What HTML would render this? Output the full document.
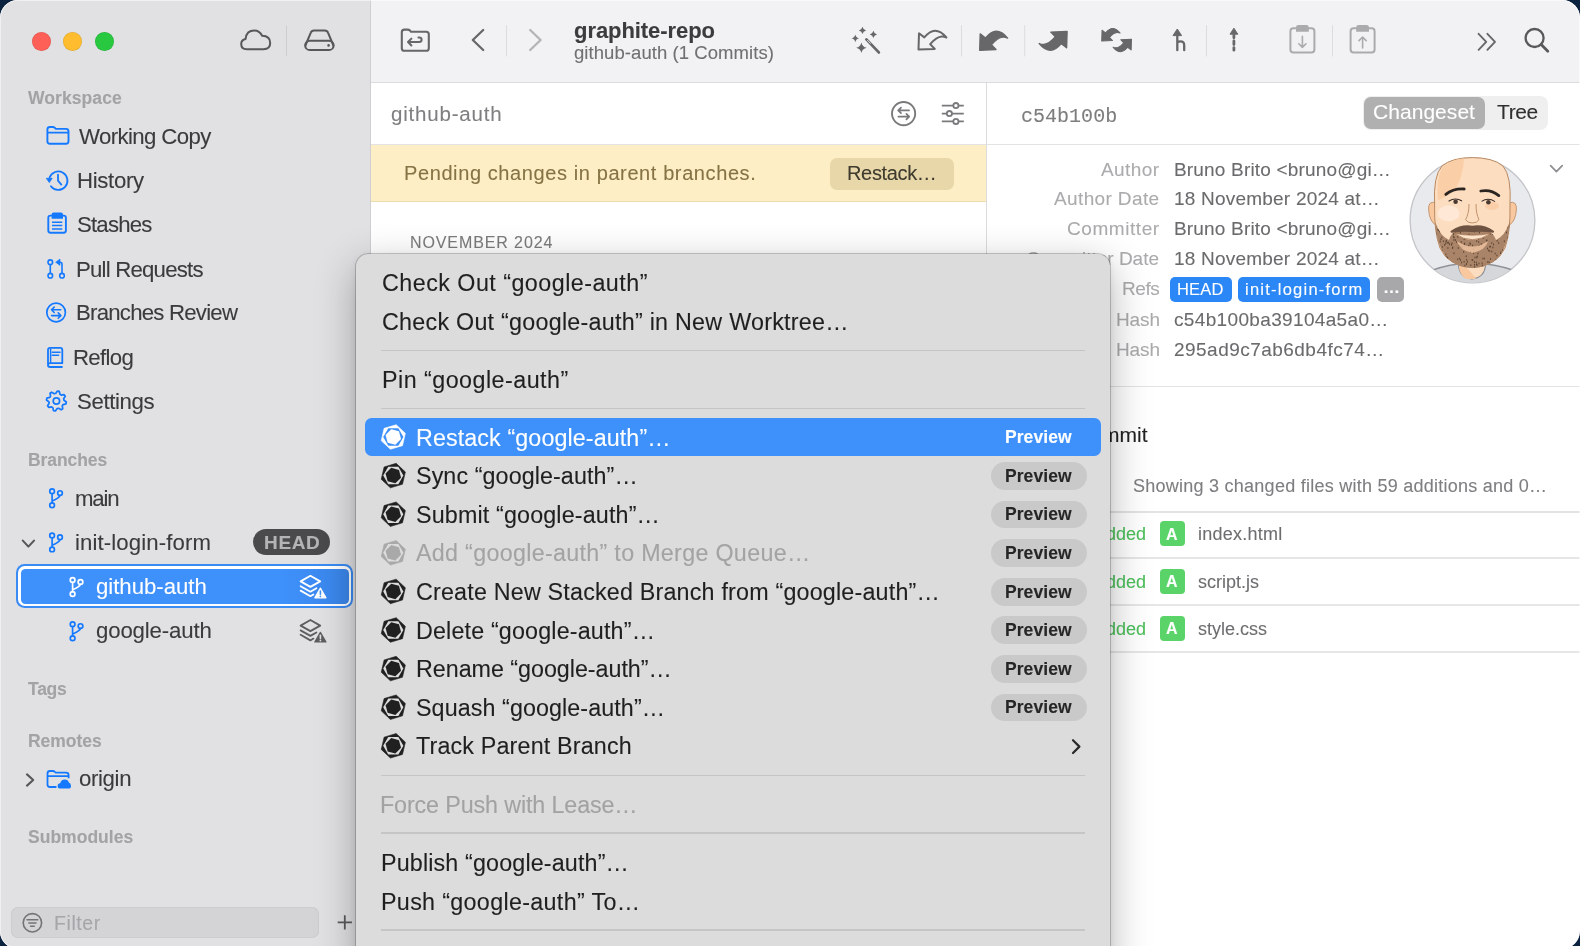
<!DOCTYPE html>
<html><head><meta charset="utf-8">
<style>
*{margin:0;padding:0;box-sizing:border-box}
html,body{width:1580px;height:946px;overflow:hidden;background:#0C2340}
.win{position:absolute;left:0;top:0;width:1580px;height:949px;border-radius:18px;overflow:hidden;background:#fff}
.abs{position:absolute}
.t{position:absolute;white-space:nowrap;font-family:"Liberation Sans",sans-serif;will-change:transform;-webkit-text-stroke:0.1px currentColor}
svg{position:absolute;overflow:visible}
</style></head><body>
<div class="win">
  <!-- sidebar -->
  <div class="abs" style="left:0;top:0;width:371px;height:946px;background:#E1E1E4"></div>
  <div class="abs" style="left:370px;top:0;width:1px;height:946px;background:#CFCFD1"></div>
  <!-- toolbar -->
  <div class="abs" style="left:371px;top:0;width:1209px;height:82px;background:#F2F2F4"></div>
  <div class="abs" style="left:371px;top:82px;width:1209px;height:1px;background:#DCDCDE"></div>
  <!-- list header border -->
  <div class="abs" style="left:371px;top:144px;width:615px;height:1px;background:#E3E3E3"></div>
  <!-- banner -->
  <div class="abs" style="left:371px;top:145px;width:615px;height:56px;background:#FDEEC5"></div>
  <div class="abs" style="left:371px;top:201px;width:615px;height:1px;background:#EBDCAE"></div>
  <div class="abs" style="left:830px;top:158px;width:124px;height:31.5px;border-radius:7px;background:#E8D7A8"></div>
  <!-- pane divider -->
  <div class="abs" style="left:986px;top:83px;width:1px;height:863px;background:#DCDCDC"></div>
  <!-- detail header border -->
  <div class="abs" style="left:987px;top:144px;width:593px;height:1px;background:#E3E3E3"></div>
  <div class="abs" style="left:987px;top:386px;width:593px;height:1px;background:#E3E3E3"></div>
  <div class="abs" style="left:987px;top:511px;width:593px;height:1.5px;background:#E3E3E3"></div>
  <div class="abs" style="left:987px;top:557px;width:593px;height:1.5px;background:#E6E6E6"></div>
  <div class="abs" style="left:987px;top:604px;width:593px;height:1.5px;background:#E6E6E6"></div>
  <div class="abs" style="left:987px;top:651px;width:593px;height:1.5px;background:#E6E6E6"></div>
  <!-- segmented control -->
  <div class="abs" style="left:1363px;top:95.6px;width:185px;height:34.3px;border-radius:8px;background:#EFEFEF"></div>
  <div class="abs" style="left:1364px;top:97px;width:120.6px;height:31.8px;border-radius:7px;background:#B0B0B0"></div>
  <!-- refs badges -->
  <div class="abs" style="left:1170px;top:276.6px;width:61.6px;height:25px;border-radius:5px;background:#2C87F6"></div>
  <div class="abs" style="left:1238px;top:276.6px;width:132.4px;height:25px;border-radius:5px;background:#2C87F6"></div>
  <div class="abs" style="left:1377px;top:276.6px;width:26.8px;height:25px;border-radius:5px;background:#A8A8AA"></div>
  <div class="t" style="left:1382.5px;top:279px;font-size:17px;line-height:17px;font-weight:700;color:#fff">…</div>
  <!-- A badges -->
  <div class="abs" style="left:1160px;top:521.3px;width:24.8px;height:25.2px;border-radius:4px;background:#5AD368"></div>
  <div class="abs" style="left:1160px;top:568.5px;width:24.8px;height:25.2px;border-radius:4px;background:#5AD368"></div>
  <div class="abs" style="left:1160px;top:615.7px;width:24.8px;height:25.2px;border-radius:4px;background:#5AD368"></div>
  <div class="t" style="left:1166px;top:526.8px;font-size:16px;line-height:16px;font-weight:700;color:#fff">A</div>
  <div class="t" style="left:1166px;top:574px;font-size:16px;line-height:16px;font-weight:700;color:#fff">A</div>
  <div class="t" style="left:1166px;top:621.2px;font-size:16px;line-height:16px;font-weight:700;color:#fff">A</div>
  <!-- traffic lights -->
  <div class="abs" style="left:31.7px;top:31.5px;width:19px;height:19px;border-radius:50%;background:#FE5F57;box-shadow:inset 0 0 0 0.5px rgba(0,0,0,0.12)"></div>
  <div class="abs" style="left:63.1px;top:31.5px;width:19px;height:19px;border-radius:50%;background:#FEBC2E;box-shadow:inset 0 0 0 0.5px rgba(0,0,0,0.12)"></div>
  <div class="abs" style="left:94.9px;top:31.5px;width:19px;height:19px;border-radius:50%;background:#28C840;box-shadow:inset 0 0 0 0.5px rgba(0,0,0,0.12)"></div>
  <!-- sidebar selection -->
  <div class="abs" style="left:16.3px;top:564.2px;width:336.8px;height:43.4px;border-radius:8.5px;background:#3A8BF3"></div><div class="abs" style="left:18.1px;top:566px;width:333.2px;height:39.8px;border-radius:6.8px;background:#FFFFFF"></div>
  <div class="abs" style="left:20.8px;top:568.6px;width:328.4px;height:35.1px;border-radius:4.5px;background:linear-gradient(90deg,#3E90FA 0%,#3E90FA 80%,#3A86EA 100%)"></div>
  <!-- HEAD badge -->
  <div class="abs" style="left:253px;top:528.6px;width:77px;height:26.5px;border-radius:13.25px;background:#4A4A4D"></div>
  <!-- filter field -->
  <div class="abs" style="left:11.2px;top:906.9px;width:307.8px;height:31.6px;border-radius:7px;background:#D4D4D7;box-shadow:inset 0 0 0 1px #CDCDD0"></div>
  <svg width='1580' height='946' style='left:0;top:0'><path d='M47.4,141.2 V129.5 Q47.4,127 49.9,127 H52.8 Q54,127 54.9,127.9 L55.8,128.9 H66 Q68.5,128.9 68.5,131.4 V141.2 Q68.5,143.7 66,143.7 H49.9 Q47.4,143.7 47.4,141.2 Z M47.4,132.6 H68.5' fill='none' stroke='#1479FF' stroke-width='1.9' stroke-linejoin='round'/><path d='M49.6,177.5 A9.2,9.2 0 1 1 50.9,186.2' fill='none' stroke='#1479FF' stroke-width='1.8' stroke-linecap='round'/><path d='M46.3,178.3 L52.2,178.3 L49.3,182.6 Z' fill='#1479FF' stroke='#1479FF' stroke-width='0.8' stroke-linejoin='round'/><path d='M58,174.6 V180.6 L61.3,184.6' fill='none' stroke='#1479FF' stroke-width='1.8' stroke-linecap='round' stroke-linejoin='round'/><rect x='48.3' y='215.6' width='17.6' height='17.2' rx='2.2' fill='none' stroke='#1479FF' stroke-width='1.9'/><path d='M51.6,218.8 V214.6 Q51.6,212.6 53.6,212.6 H61 Q63,212.6 63,214.6 V218.8 Z' fill='#1479FF'/><path d='M52,222.2 H62.3 M52,225.6 H62.3 M52,229 H62.3' stroke='#1479FF' stroke-width='1.5'/><g fill='none' stroke='#1479FF' stroke-width='1.6'><circle cx='50.3' cy='262.2' r='2.3'/><circle cx='50.3' cy='275.7' r='2.3'/><circle cx='62' cy='275.7' r='2.3'/><path d='M50.3,264.5 V273.4 M62,273.4 V264 Q62,262.2 60.2,262.2 H58.5'/></g><path d='M55.6,262.2 L60,259 V265.4 Z' fill='#1479FF' stroke='#1479FF' stroke-width='0.6' stroke-linejoin='round'/><circle cx='56.1' cy='312.5' r='9.3' fill='none' stroke='#1479FF' stroke-width='1.7'/><path d='M51.5,309.8 H60.8 M51.6,315.6 H60.9 M54.2,307.1 L51.5,309.8 L54.2,312.5 M58.2,312.9 L60.9,315.6 L58.2,318.3' fill='none' stroke='#1479FF' stroke-width='1.6' stroke-linecap='round' stroke-linejoin='round'/><path d='M48,364.5 V350 Q48,347.9 50.1,347.9 H60.3 Q62.3,347.9 62.3,350 V363.2 H50.2 Q48,363.2 48,365.3 Q48,367 50.2,367 H62.6' fill='none' stroke='#1479FF' stroke-width='1.8' stroke-linejoin='round'/><path d='M50.6,348.5 V362.8' stroke='#1479FF' stroke-width='1.5'/><path d='M52.2,352.2 H60 M52.2,355.2 H58.6' stroke='#1479FF' stroke-width='1.5' stroke-linecap='round'/><polygon points='57.38,391.05 59.30,391.43 59.98,394.30 61.22,395.13 64.13,394.66 65.22,396.29 63.67,398.79 63.96,400.26 66.35,401.98 65.97,403.90 63.10,404.58 62.27,405.82 62.74,408.73 61.11,409.82 58.61,408.27 57.14,408.56 55.42,410.95 53.50,410.57 52.82,407.70 51.58,406.87 48.67,407.34 47.58,405.71 49.13,403.21 48.84,401.74 46.45,400.02 46.83,398.10 49.70,397.42 50.53,396.18 50.06,393.27 51.69,392.18 54.19,393.73 55.66,393.44' fill='none' stroke='#1479FF' stroke-width='1.7' stroke-linejoin='round'/><circle cx='56.4' cy='401' r='3.2' fill='none' stroke='#1479FF' stroke-width='1.7'/><g fill='none' stroke='#1479FF' stroke-width='1.7' stroke-linecap='round'><circle cx='52.1' cy='491.2' r='2.35'/><circle cx='60.0' cy='493.09999999999997' r='2.35'/><circle cx='52.1' cy='505.2' r='2.35'/><path d='M52.1,493.59999999999997 V502.8 M59.9,495.5 Q59.300000000000004,497.8 52.7,500.8'/></g><g fill='none' stroke='#1479FF' stroke-width='1.7' stroke-linecap='round'><circle cx='52.1' cy='535.4' r='2.35'/><circle cx='60.0' cy='537.3' r='2.35'/><circle cx='52.1' cy='549.4' r='2.35'/><path d='M52.1,537.8 V547.0 M59.9,539.6999999999999 Q59.300000000000004,542.0 52.7,545.0'/></g><g fill='none' stroke='#FFFFFF' stroke-width='1.7' stroke-linecap='round'><circle cx='72.6' cy='580.0' r='2.35'/><circle cx='80.5' cy='581.9' r='2.35'/><circle cx='72.6' cy='594.0' r='2.35'/><path d='M72.6,582.4 V591.6 M80.39999999999999,584.3 Q79.8,586.6 73.19999999999999,589.6'/></g><g fill='none' stroke='#1479FF' stroke-width='1.7' stroke-linecap='round'><circle cx='72.6' cy='624.2' r='2.35'/><circle cx='80.5' cy='626.1' r='2.35'/><circle cx='72.6' cy='638.2' r='2.35'/><path d='M72.6,626.6 V635.8000000000001 M80.39999999999999,628.5 Q79.8,630.8000000000001 73.19999999999999,633.8000000000001'/></g><path d='M22.8,540.6 L28.4,546.6 L34,540.6' fill='none' stroke='#58585B' stroke-width='2.1' stroke-linecap='round' stroke-linejoin='round'/><path d='M27,774.4 L33.2,780 L27,785.6' fill='none' stroke='#58585B' stroke-width='2.1' stroke-linecap='round' stroke-linejoin='round'/><path d='M56.5,787 H50 Q47.5,787 47.5,784.5 V773.5 Q47.5,771 50,771 H52.8 Q54,771 54.9,771.9 L55.7,772.6 H66.1 Q68.6,772.6 68.6,775.1 V778.3 M47.5,776.2 H68.6' fill='none' stroke='#1479FF' stroke-width='1.8' stroke-linejoin='round'/><path d='M59.6,788.6 Q57.6,788.6 57.6,786 Q57.6,783.4 60.2,783.2 Q61,779.4 64.8,779.4 Q68,779.4 68.9,782.6 Q71,783.2 71,785.9 Q71,788.6 68.4,788.6 Z' fill='#1479FF'/><g fill='none' stroke='#FFFFFF' stroke-width='1.8' stroke-linejoin='round' stroke-linecap='round'><path d='M310.4,575.8 L320.2,581.4 L310.4,586.9 L300.59999999999997,581.4 Z'/><path d='M300.59999999999997,586.1999999999999 L310.4,591.6999999999999 L316.4,588.3'/><path d='M300.59999999999997,590.5999999999999 L310.4,596.1999999999999 L313.4,594.4'/></g><path d='M320.4,588.0999999999999 L326.0,597.8 L314.79999999999995,597.8 Z' fill='#FFFFFF' stroke='#FFFFFF' stroke-width='1.2' stroke-linejoin='round'/><path d='M320.4,591.0 V594.1999999999999' stroke='#3E90FA' stroke-width='1.6' stroke-linecap='round'/><circle cx='320.4' cy='596.3' r='0.9' fill='#3E90FA'/><g fill='none' stroke='#5E5E61' stroke-width='1.8' stroke-linejoin='round' stroke-linecap='round'><path d='M310.4,620.0 L320.2,625.6 L310.4,631.1 L300.59999999999997,625.6 Z'/><path d='M300.59999999999997,630.4 L310.4,635.9 L316.4,632.5'/><path d='M300.59999999999997,634.8 L310.4,640.4 L313.4,638.6'/></g><path d='M320.4,632.3 L326.0,642.0 L314.79999999999995,642.0 Z' fill='#5E5E61' stroke='#5E5E61' stroke-width='1.2' stroke-linejoin='round'/><path d='M320.4,635.2 V638.4' stroke='#E1E1E4' stroke-width='1.6' stroke-linecap='round'/><circle cx='320.4' cy='640.5' r='0.9' fill='#E1E1E4'/><circle cx='32.4' cy='922.8' r='9.2' fill='none' stroke='#747477' stroke-width='1.6'/><path d='M27,919.8 H37.8 M28.8,923 H36 M30.6,926.2 H34.2' stroke='#747477' stroke-width='1.6' stroke-linecap='round'/><path d='M344.8,915.3 V929.5 M337.7,922.4 H351.9' stroke='#5A5A5D' stroke-width='1.8'/><path d='M246.8,49.2 Q241.2,49.2 241.2,44 Q241.2,40 245.6,39 Q246.4,30.6 254.4,30.6 Q259.4,30.6 262.2,35.8 Q270.2,36 270.2,43 Q270.2,49.2 263.6,49.2 Z' fill='none' stroke='#58585B' stroke-width='2' stroke-linejoin='round'/><rect x='286' y='25.6' width='1' height='30.6' fill='#CDCDD0'/><path d='M305.2,46 L310.8,32.6 Q311.6,30.4 314,30.4 H324.8 Q327.2,30.4 328,32.6 L333.6,46' fill='none' stroke='#58585B' stroke-width='2' stroke-linejoin='round'/><rect x='305.2' y='40.8' width='28.4' height='9.2' rx='4.6' fill='none' stroke='#58585B' stroke-width='2'/><circle cx='328.6' cy='45.4' r='1.3' fill='#58585B'/><path d='M401.8,48.2 V32.2 Q401.8,29.6 404.4,29.6 H407.6 Q409,29.6 410,30.6 L411,31.7 H426.2 Q428.8,31.7 428.8,34.3 V48.2 Q428.8,50.8 426.2,50.8 H404.4 Q401.8,50.8 401.8,48.2 Z' fill='none' stroke='#67676A' stroke-width='2.1' stroke-linejoin='round'/><path d='M411.4,38.6 L408,42 L411.4,45.5 M408.4,42 H419 Q421.6,42 421.6,39.7 Q421.6,37.4 419,37.4 H418.4' fill='none' stroke='#67676A' stroke-width='2' stroke-linecap='round' stroke-linejoin='round'/><path d='M483.2,30 L472.8,40 L483.2,50' fill='none' stroke='#67676A' stroke-width='2.3' stroke-linecap='round' stroke-linejoin='round'/><rect x='506' y='25.2' width='1' height='31.2' fill='#DCDCDE'/><path d='M530.2,30 L540.6,40 L530.2,50' fill='none' stroke='#B4B4B7' stroke-width='2.3' stroke-linecap='round' stroke-linejoin='round'/><path d='M862.5,26.799999999999997 Q863.112,29.787999999999997 866.1,30.4 Q863.112,31.012 862.5,34.0 Q861.888,31.012 858.9,30.4 Q861.888,29.787999999999997 862.5,26.799999999999997 Z M873.4,30.799999999999997 Q874.012,33.788 877.0,34.4 Q874.012,35.012 873.4,38.0 Q872.788,35.012 869.8,34.4 Q872.788,33.788 873.4,30.799999999999997 Z M855.3,34.4 Q855.963,37.637 859.1999999999999,38.3 Q855.963,38.962999999999994 855.3,42.199999999999996 Q854.637,38.962999999999994 851.4,38.3 Q854.637,37.637 855.3,34.4 Z M861.4,42.5 Q862.3009999999999,46.898999999999994 866.6999999999999,47.8 Q862.3009999999999,48.701 861.4,53.099999999999994 Q860.499,48.701 856.1,47.8 Q860.499,46.898999999999994 861.4,42.5 Z' fill='#67676A'/><path d='M866.4,39.4 L878.8,52.4' stroke='#67676A' stroke-width='2.8' stroke-linecap='round'/><path d='M867.6,40.4 L870.4,43.3' stroke='#F2F2F4' stroke-width='0.9' stroke-linecap='round'/><g transform='translate(917.4,30.2)'><path d='M1.6,3.1 L1.1,19.4 L17.4,18.7 L12.8,14 C16,10.2 20,6.6 24.4,6.3 Q27,6.2 29,7.3 C26,3.6 22,0.5 17.6,0.5 C13.4,0.5 10,3.6 6.9,7.2 Z' fill='none' stroke='#67676A' stroke-width='2' stroke-linejoin='round'/></g><rect x='961' y='25.2' width='1' height='31.2' fill='#DCDCDE'/><g transform='translate(978.6,30.8)'><path d='M1.6,3.1 L1.1,19.4 L17.4,18.7 L12.8,14 C16,10.2 20,6.6 24.4,6.3 Q27,6.2 29,7.3 C26,3.6 22,0.5 17.6,0.5 C13.4,0.5 10,3.6 6.9,7.2 Z' fill='#67676A' stroke='#67676A' stroke-width='1.4' stroke-linejoin='round'/></g><rect x='1024.2' y='25.2' width='1' height='31.2' fill='#DCDCDE'/><g transform='translate(1068.2,50.8) scale(-1,-1)'><path d='M1.6,3.1 L1.1,19.4 L17.4,18.7 L12.8,14 C16,10.2 20,6.6 24.4,6.3 Q27,6.2 29,7.3 C26,3.6 22,0.5 17.6,0.5 C13.4,0.5 10,3.6 6.9,7.2 Z' fill='#67676A' stroke='#67676A' stroke-width='1.4' stroke-linejoin='round'/></g><g transform='translate(1101,28.2) scale(0.66)'><path d='M1.6,3.1 L1.1,19.4 L17.4,18.7 L12.8,14 C16,10.2 20,6.6 24.4,6.3 Q27,6.2 29,7.3 C26,3.6 22,0.5 17.6,0.5 C13.4,0.5 10,3.6 6.9,7.2 Z' fill='#67676A' stroke='#67676A' stroke-width='1.6' stroke-linejoin='round'/></g><g transform='translate(1132.2,52) scale(-0.66,-0.66)'><path d='M1.6,3.1 L1.1,19.4 L17.4,18.7 L12.8,14 C16,10.2 20,6.6 24.4,6.3 Q27,6.2 29,7.3 C26,3.6 22,0.5 17.6,0.5 C13.4,0.5 10,3.6 6.9,7.2 Z' fill='#67676A' stroke='#67676A' stroke-width='1.6' stroke-linejoin='round'/></g><path d='M1177.3,50.2 V36 M1177.3,42.6 Q1177.6,41.4 1180.4,41.4 Q1184.2,41.4 1184.2,45 V50.2' fill='none' stroke='#67676A' stroke-width='2.3' stroke-linecap='round' stroke-linejoin='round'/><path d='M1177.3,29 L1181.6,35.6 H1173 Z' fill='#67676A' stroke='#67676A' stroke-width='1' stroke-linejoin='round'/><rect x='1206' y='25.2' width='1' height='31.2' fill='#DCDCDE'/><path d='M1233.9,28.2 L1237.8,34.2 H1230 Z' fill='#67676A' stroke='#67676A' stroke-width='1' stroke-linejoin='round'/><path d='M1233.9,35.4 V37.8 M1233.9,41 V44.6 M1233.9,47.6 V50.2' stroke='#67676A' stroke-width='2.8' stroke-linecap='round'/><rect x='1290.4' y='28.2' width='24' height='24.4' rx='3' fill='none' stroke='#ABABAE' stroke-width='2'/><path d='M1296.0,31.8 V27.4 Q1296.0,25 1298.4,25 H1306.4 Q1308.8000000000002,25 1308.8000000000002,27.4 V31.8 Z' fill='#ABABAE'/><path d='M1302.4,36.4 V47.4 M1298.8000000000002,43.8 L1302.4,47.4 L1306.0,43.8' fill='none' stroke='#ABABAE' stroke-width='1.6' stroke-linecap='round' stroke-linejoin='round'/><rect x='1350.6' y='28.2' width='24' height='24.4' rx='3' fill='none' stroke='#ABABAE' stroke-width='2'/><path d='M1356.1999999999998,31.8 V27.4 Q1356.1999999999998,25 1358.6,25 H1366.6 Q1369.0,25 1369.0,27.4 V31.8 Z' fill='#ABABAE'/><path d='M1362.6,48 V37 M1359.0,40.6 L1362.6,37 L1366.1999999999998,40.6' fill='none' stroke='#ABABAE' stroke-width='1.6' stroke-linecap='round' stroke-linejoin='round'/><rect x='1332' y='25.4' width='1' height='31' fill='#DCDCDE'/><path d='M1478.6,33.8 L1486.2,41.8 L1478.6,49.8 M1487.4,33.8 L1495,41.8 L1487.4,49.8' fill='none' stroke='#67676A' stroke-width='1.9' stroke-linecap='round' stroke-linejoin='round'/><circle cx='1534.6' cy='38' r='9' fill='none' stroke='#59595C' stroke-width='2.3'/><path d='M1541.2,44.6 L1547.8,51.2' stroke='#59595C' stroke-width='2.8' stroke-linecap='round'/><circle cx='903.6' cy='113.6' r='11.6' fill='none' stroke='#7A7A7C' stroke-width='1.9'/><path d='M898.2,110.4 H909 M898.4,116.6 H909.2 M901,107.6 L898.2,110.4 L901,113.2 M906.4,113.8 L909.2,116.6 L906.4,119.4' fill='none' stroke='#7A7A7C' stroke-width='1.7' stroke-linecap='round' stroke-linejoin='round'/><path d='M941.8,105.6 H963.8 M941.8,113.6 H963.8 M941.8,121.4 H963.8' stroke='#7A7A7C' stroke-width='1.8'/><circle cx='955.9' cy='105.6' r='2.6' fill='#FFFFFF' stroke='#7A7A7C' stroke-width='1.8'/><circle cx='949.4' cy='113.6' r='2.6' fill='#FFFFFF' stroke='#7A7A7C' stroke-width='1.8'/><circle cx='955.9' cy='121.4' r='2.6' fill='#FFFFFF' stroke='#7A7A7C' stroke-width='1.8'/><path d='M1550.6,165.6 L1556.4,171.6 L1562.2,165.6' fill='none' stroke='#8E8E90' stroke-width='1.7' stroke-linecap='round' stroke-linejoin='round'/><defs><clipPath id='avc'><circle cx='1472.5' cy='220.4' r='62.4'/></clipPath><clipPath id='beardc'><path d='M1435.2,222 Q1436,246 1448,259 Q1459,268 1472.3,268 Q1486,268 1497,259 Q1509,246 1509.6,222 Q1505,236 1496,240 Q1492,228 1472.3,226.5 Q1452,228 1449,240 Q1440,236 1435.2,222 Z'/></clipPath></defs><circle cx='1472.5' cy='220.4' r='62.4' fill='#E9EAEE' stroke='#C4C5C8' stroke-width='1.3'/><g clip-path='url(#avc)'><path d='M1420,275 Q1440,266 1458,264 L1486,264 Q1505,266 1526,275 L1540,300 H1405 Z' fill='#D6D7DA' stroke='#8F9399' stroke-width='1.3'/><path d='M1458.5,252 V266 Q1460,278 1472,279 Q1484,278 1485.5,266 V252 Z' fill='#FCDDC0' stroke='#8F9399' stroke-width='1.1'/><path d='M1460,262 Q1470,270 1476,279 L1466,279 Q1459,274 1459,266 Z' fill='#F9C89E'/></g><path d='M1436,203 Q1428,200 1428.6,210 Q1429.4,222 1437,226 Z' fill='#F9C89E' stroke='#B98962' stroke-width='0.8'/><path d='M1509,203 Q1517,200 1516.4,210 Q1515.6,222 1508,226 Z' fill='#F9C89E' stroke='#B98962' stroke-width='0.8'/><path d='M1434.6,205 Q1433,176 1442,166 Q1452,157.6 1472.3,157.6 Q1493,157.6 1503,166 Q1511.6,176 1510,205 Q1510.6,232 1505,248 Q1497,266 1472.3,267.6 Q1448,266 1440,248 Q1434,232 1434.6,205 Z' fill='#FCDDC0' stroke='#B98962' stroke-width='1'/><path d='M1442,168 Q1452,158.4 1464,158.4 Q1463,176 1456,188 Q1450,196 1438,200 Q1436,180 1442,168 Z' fill='#F9C89E' opacity='0.75'/><ellipse cx='1448.6' cy='213.4' rx='11' ry='8' fill='#FFE9D8' opacity='0.9'/><ellipse cx='1492' cy='206' rx='7' ry='4' fill='#F9C89E' opacity='0.7'/><g clip-path='url(#beardc)'><rect x='1430' y='218' width='85' height='55' fill='#A98468'/><ellipse cx='1458.9' cy='227.2' rx='0.55' ry='1.0' fill='#5C4332'/><ellipse cx='1484.1' cy='223.5' rx='0.55' ry='1.0' fill='#5C4332'/><ellipse cx='1475.3' cy='237.6' rx='0.55' ry='1.0' fill='#5C4332'/><ellipse cx='1438.5' cy='244.4' rx='0.55' ry='1.0' fill='#5C4332'/><ellipse cx='1436.9' cy='240.8' rx='0.55' ry='1.0' fill='#5C4332'/><ellipse cx='1439.4' cy='224.4' rx='0.55' ry='1.0' fill='#5C4332'/><ellipse cx='1466.7' cy='259.7' rx='0.55' ry='1.0' fill='#5C4332'/><ellipse cx='1443.5' cy='230.7' rx='0.55' ry='1.0' fill='#5C4332'/><ellipse cx='1482.3' cy='265.5' rx='0.55' ry='1.0' fill='#5C4332'/><ellipse cx='1478.4' cy='239.0' rx='0.55' ry='1.0' fill='#5C4332'/><ellipse cx='1509.2' cy='222.2' rx='0.55' ry='1.0' fill='#5C4332'/><ellipse cx='1500.1' cy='233.9' rx='0.55' ry='1.0' fill='#5C4332'/><ellipse cx='1445.1' cy='225.7' rx='0.55' ry='1.0' fill='#5C4332'/><ellipse cx='1457.8' cy='259.2' rx='0.55' ry='1.0' fill='#5C4332'/><ellipse cx='1447.9' cy='247.9' rx='0.55' ry='1.0' fill='#5C4332'/><ellipse cx='1483.2' cy='237.9' rx='0.55' ry='1.0' fill='#5C4332'/><ellipse cx='1476.2' cy='223.0' rx='0.55' ry='1.0' fill='#5C4332'/><ellipse cx='1438.6' cy='229.9' rx='0.55' ry='1.0' fill='#5C4332'/><ellipse cx='1486.4' cy='240.5' rx='0.55' ry='1.0' fill='#5C4332'/><ellipse cx='1458.2' cy='248.1' rx='0.55' ry='1.0' fill='#5C4332'/><ellipse cx='1468.9' cy='234.4' rx='0.55' ry='1.0' fill='#5C4332'/><ellipse cx='1495.2' cy='253.6' rx='0.55' ry='1.0' fill='#5C4332'/><ellipse cx='1452.8' cy='247.6' rx='0.55' ry='1.0' fill='#5C4332'/><ellipse cx='1474.4' cy='262.0' rx='0.55' ry='1.0' fill='#5C4332'/><ellipse cx='1490.2' cy='233.8' rx='0.55' ry='1.0' fill='#5C4332'/><ellipse cx='1509.5' cy='225.7' rx='0.55' ry='1.0' fill='#5C4332'/><ellipse cx='1466.2' cy='256.3' rx='0.55' ry='1.0' fill='#5C4332'/><ellipse cx='1445.7' cy='243.5' rx='0.55' ry='1.0' fill='#5C4332'/><ellipse cx='1437.0' cy='252.1' rx='0.55' ry='1.0' fill='#5C4332'/><ellipse cx='1492.9' cy='247.5' rx='0.55' ry='1.0' fill='#5C4332'/><ellipse cx='1501.4' cy='235.1' rx='0.55' ry='1.0' fill='#5C4332'/><ellipse cx='1487.5' cy='248.5' rx='0.55' ry='1.0' fill='#5C4332'/><ellipse cx='1478.7' cy='241.9' rx='0.55' ry='1.0' fill='#5C4332'/><ellipse cx='1498.7' cy='265.3' rx='0.55' ry='1.0' fill='#5C4332'/><ellipse cx='1470.5' cy='251.9' rx='0.55' ry='1.0' fill='#5C4332'/><ellipse cx='1438.7' cy='253.7' rx='0.55' ry='1.0' fill='#5C4332'/><ellipse cx='1483.8' cy='267.7' rx='0.55' ry='1.0' fill='#5C4332'/><ellipse cx='1497.3' cy='233.7' rx='0.55' ry='1.0' fill='#5C4332'/><ellipse cx='1463.7' cy='252.1' rx='0.55' ry='1.0' fill='#5C4332'/><ellipse cx='1435.7' cy='242.2' rx='0.55' ry='1.0' fill='#5C4332'/><ellipse cx='1446.9' cy='225.6' rx='0.55' ry='1.0' fill='#5C4332'/><ellipse cx='1438.5' cy='256.9' rx='0.55' ry='1.0' fill='#5C4332'/><ellipse cx='1444.0' cy='231.9' rx='0.55' ry='1.0' fill='#5C4332'/><ellipse cx='1464.1' cy='261.8' rx='0.55' ry='1.0' fill='#5C4332'/><ellipse cx='1440.2' cy='241.6' rx='0.55' ry='1.0' fill='#5C4332'/><ellipse cx='1476.3' cy='262.4' rx='0.55' ry='1.0' fill='#5C4332'/><ellipse cx='1497.1' cy='261.5' rx='0.55' ry='1.0' fill='#5C4332'/><ellipse cx='1455.4' cy='239.9' rx='0.55' ry='1.0' fill='#5C4332'/><ellipse cx='1461.6' cy='262.4' rx='0.55' ry='1.0' fill='#5C4332'/><ellipse cx='1507.7' cy='227.2' rx='0.55' ry='1.0' fill='#5C4332'/><ellipse cx='1447.6' cy='231.1' rx='0.55' ry='1.0' fill='#5C4332'/><ellipse cx='1452.0' cy='243.3' rx='0.55' ry='1.0' fill='#5C4332'/><ellipse cx='1479.4' cy='232.6' rx='0.55' ry='1.0' fill='#5C4332'/><ellipse cx='1434.3' cy='240.1' rx='0.55' ry='1.0' fill='#5C4332'/><ellipse cx='1462.4' cy='247.2' rx='0.55' ry='1.0' fill='#5C4332'/><ellipse cx='1507.4' cy='253.1' rx='0.55' ry='1.0' fill='#5C4332'/><ellipse cx='1473.7' cy='249.6' rx='0.55' ry='1.0' fill='#5C4332'/><ellipse cx='1486.1' cy='222.6' rx='0.55' ry='1.0' fill='#5C4332'/><ellipse cx='1503.3' cy='257.4' rx='0.55' ry='1.0' fill='#5C4332'/><ellipse cx='1501.3' cy='258.3' rx='0.55' ry='1.0' fill='#5C4332'/><ellipse cx='1464.2' cy='239.2' rx='0.55' ry='1.0' fill='#5C4332'/><ellipse cx='1442.0' cy='250.4' rx='0.55' ry='1.0' fill='#5C4332'/><ellipse cx='1438.8' cy='223.2' rx='0.55' ry='1.0' fill='#5C4332'/><ellipse cx='1450.1' cy='227.8' rx='0.55' ry='1.0' fill='#5C4332'/><ellipse cx='1460.2' cy='222.5' rx='0.55' ry='1.0' fill='#5C4332'/><ellipse cx='1434.0' cy='227.3' rx='0.55' ry='1.0' fill='#5C4332'/><ellipse cx='1441.8' cy='237.5' rx='0.55' ry='1.0' fill='#5C4332'/><ellipse cx='1436.0' cy='262.0' rx='0.55' ry='1.0' fill='#5C4332'/><ellipse cx='1481.3' cy='227.1' rx='0.55' ry='1.0' fill='#5C4332'/><ellipse cx='1453.4' cy='236.7' rx='0.55' ry='1.0' fill='#5C4332'/><ellipse cx='1462.0' cy='225.9' rx='0.55' ry='1.0' fill='#5C4332'/><ellipse cx='1499.4' cy='267.7' rx='0.55' ry='1.0' fill='#5C4332'/><ellipse cx='1469.9' cy='243.2' rx='0.55' ry='1.0' fill='#5C4332'/><ellipse cx='1440.6' cy='224.9' rx='0.55' ry='1.0' fill='#5C4332'/><ellipse cx='1460.4' cy='232.7' rx='0.55' ry='1.0' fill='#5C4332'/><ellipse cx='1497.8' cy='227.7' rx='0.55' ry='1.0' fill='#5C4332'/><ellipse cx='1435.8' cy='265.6' rx='0.55' ry='1.0' fill='#5C4332'/><ellipse cx='1474.7' cy='227.0' rx='0.55' ry='1.0' fill='#5C4332'/><ellipse cx='1475.8' cy='221.3' rx='0.55' ry='1.0' fill='#5C4332'/><ellipse cx='1474.7' cy='267.0' rx='0.55' ry='1.0' fill='#5C4332'/><ellipse cx='1500.5' cy='253.4' rx='0.55' ry='1.0' fill='#5C4332'/><ellipse cx='1454.1' cy='237.6' rx='0.55' ry='1.0' fill='#5C4332'/><ellipse cx='1446.9' cy='257.1' rx='0.55' ry='1.0' fill='#5C4332'/><ellipse cx='1475.0' cy='257.4' rx='0.55' ry='1.0' fill='#5C4332'/><ellipse cx='1459.4' cy='230.7' rx='0.55' ry='1.0' fill='#5C4332'/><ellipse cx='1496.5' cy='267.3' rx='0.55' ry='1.0' fill='#5C4332'/><ellipse cx='1499.7' cy='258.7' rx='0.55' ry='1.0' fill='#5C4332'/><ellipse cx='1497.0' cy='255.5' rx='0.55' ry='1.0' fill='#5C4332'/><ellipse cx='1451.5' cy='244.8' rx='0.55' ry='1.0' fill='#5C4332'/><ellipse cx='1461.4' cy='221.4' rx='0.55' ry='1.0' fill='#5C4332'/><ellipse cx='1436.2' cy='233.4' rx='0.55' ry='1.0' fill='#5C4332'/><ellipse cx='1454.0' cy='253.2' rx='0.55' ry='1.0' fill='#5C4332'/><ellipse cx='1507.7' cy='241.5' rx='0.55' ry='1.0' fill='#5C4332'/><ellipse cx='1506.2' cy='267.4' rx='0.55' ry='1.0' fill='#5C4332'/><ellipse cx='1507.5' cy='237.5' rx='0.55' ry='1.0' fill='#5C4332'/><ellipse cx='1451.0' cy='230.9' rx='0.55' ry='1.0' fill='#5C4332'/><ellipse cx='1449.1' cy='229.8' rx='0.55' ry='1.0' fill='#5C4332'/><ellipse cx='1482.1' cy='263.2' rx='0.55' ry='1.0' fill='#5C4332'/><ellipse cx='1498.7' cy='243.0' rx='0.55' ry='1.0' fill='#5C4332'/><ellipse cx='1484.3' cy='258.4' rx='0.55' ry='1.0' fill='#5C4332'/><ellipse cx='1440.5' cy='251.7' rx='0.55' ry='1.0' fill='#5C4332'/><ellipse cx='1504.1' cy='257.6' rx='0.55' ry='1.0' fill='#5C4332'/><ellipse cx='1491.8' cy='242.9' rx='0.55' ry='1.0' fill='#5C4332'/><ellipse cx='1447.7' cy='257.9' rx='0.55' ry='1.0' fill='#5C4332'/><ellipse cx='1459.6' cy='258.4' rx='0.55' ry='1.0' fill='#5C4332'/><ellipse cx='1508.8' cy='239.0' rx='0.55' ry='1.0' fill='#5C4332'/><ellipse cx='1464.9' cy='265.4' rx='0.55' ry='1.0' fill='#5C4332'/><ellipse cx='1489.8' cy='228.2' rx='0.55' ry='1.0' fill='#5C4332'/><ellipse cx='1443.8' cy='227.3' rx='0.55' ry='1.0' fill='#5C4332'/><ellipse cx='1503.7' cy='258.7' rx='0.55' ry='1.0' fill='#5C4332'/><ellipse cx='1445.3' cy='259.7' rx='0.55' ry='1.0' fill='#5C4332'/><ellipse cx='1509.5' cy='251.5' rx='0.55' ry='1.0' fill='#5C4332'/><ellipse cx='1461.0' cy='246.3' rx='0.55' ry='1.0' fill='#5C4332'/><ellipse cx='1444.1' cy='220.7' rx='0.55' ry='1.0' fill='#5C4332'/><ellipse cx='1508.8' cy='251.2' rx='0.55' ry='1.0' fill='#5C4332'/><ellipse cx='1474.5' cy='264.8' rx='0.55' ry='1.0' fill='#5C4332'/><ellipse cx='1467.4' cy='261.8' rx='0.55' ry='1.0' fill='#5C4332'/><ellipse cx='1497.6' cy='230.1' rx='0.55' ry='1.0' fill='#5C4332'/><ellipse cx='1453.4' cy='234.1' rx='0.55' ry='1.0' fill='#5C4332'/><ellipse cx='1452.5' cy='248.1' rx='0.55' ry='1.0' fill='#5C4332'/><ellipse cx='1454.0' cy='240.1' rx='0.55' ry='1.0' fill='#5C4332'/><ellipse cx='1444.1' cy='263.7' rx='0.55' ry='1.0' fill='#5C4332'/><ellipse cx='1461.2' cy='242.0' rx='0.55' ry='1.0' fill='#5C4332'/><ellipse cx='1478.9' cy='263.4' rx='0.55' ry='1.0' fill='#5C4332'/><ellipse cx='1466.4' cy='264.1' rx='0.55' ry='1.0' fill='#5C4332'/><ellipse cx='1472.6' cy='245.5' rx='0.55' ry='1.0' fill='#5C4332'/><ellipse cx='1474.3' cy='220.9' rx='0.55' ry='1.0' fill='#5C4332'/><ellipse cx='1467.9' cy='228.8' rx='0.55' ry='1.0' fill='#5C4332'/><ellipse cx='1434.3' cy='258.4' rx='0.55' ry='1.0' fill='#5C4332'/><ellipse cx='1447.3' cy='242.7' rx='0.55' ry='1.0' fill='#5C4332'/><ellipse cx='1489.8' cy='246.7' rx='0.55' ry='1.0' fill='#5C4332'/><ellipse cx='1459.1' cy='244.9' rx='0.55' ry='1.0' fill='#5C4332'/><ellipse cx='1476.8' cy='257.6' rx='0.55' ry='1.0' fill='#5C4332'/><ellipse cx='1442.2' cy='246.9' rx='0.55' ry='1.0' fill='#5C4332'/><ellipse cx='1453.1' cy='233.3' rx='0.55' ry='1.0' fill='#5C4332'/><ellipse cx='1493.5' cy='244.4' rx='0.55' ry='1.0' fill='#5C4332'/><ellipse cx='1477.3' cy='256.5' rx='0.55' ry='1.0' fill='#5C4332'/><ellipse cx='1504.3' cy='241.3' rx='0.55' ry='1.0' fill='#5C4332'/><ellipse cx='1481.2' cy='244.3' rx='0.55' ry='1.0' fill='#5C4332'/><ellipse cx='1473.4' cy='253.3' rx='0.55' ry='1.0' fill='#5C4332'/><ellipse cx='1468.8' cy='245.6' rx='0.55' ry='1.0' fill='#5C4332'/><ellipse cx='1470.8' cy='265.2' rx='0.55' ry='1.0' fill='#5C4332'/><ellipse cx='1487.8' cy='262.1' rx='0.55' ry='1.0' fill='#5C4332'/><ellipse cx='1506.5' cy='232.5' rx='0.55' ry='1.0' fill='#5C4332'/><ellipse cx='1477.1' cy='265.3' rx='0.55' ry='1.0' fill='#5C4332'/><ellipse cx='1498.7' cy='226.6' rx='0.55' ry='1.0' fill='#5C4332'/><ellipse cx='1443.4' cy='241.2' rx='0.55' ry='1.0' fill='#5C4332'/><ellipse cx='1439.6' cy='231.6' rx='0.55' ry='1.0' fill='#5C4332'/><ellipse cx='1439.6' cy='252.1' rx='0.55' ry='1.0' fill='#5C4332'/><ellipse cx='1494.4' cy='263.1' rx='0.55' ry='1.0' fill='#5C4332'/><ellipse cx='1445.9' cy='254.4' rx='0.55' ry='1.0' fill='#5C4332'/><ellipse cx='1484.8' cy='226.9' rx='0.55' ry='1.0' fill='#5C4332'/><ellipse cx='1502.0' cy='266.4' rx='0.55' ry='1.0' fill='#5C4332'/><ellipse cx='1450.9' cy='265.7' rx='0.55' ry='1.0' fill='#5C4332'/><ellipse cx='1464.7' cy='243.4' rx='0.55' ry='1.0' fill='#5C4332'/><ellipse cx='1510.2' cy='260.0' rx='0.55' ry='1.0' fill='#5C4332'/><ellipse cx='1446.4' cy='240.7' rx='0.55' ry='1.0' fill='#5C4332'/><ellipse cx='1473.7' cy='236.3' rx='0.55' ry='1.0' fill='#5C4332'/><ellipse cx='1449.1' cy='235.3' rx='0.55' ry='1.0' fill='#5C4332'/><ellipse cx='1489.6' cy='220.9' rx='0.55' ry='1.0' fill='#5C4332'/><ellipse cx='1476.7' cy='241.1' rx='0.55' ry='1.0' fill='#5C4332'/><ellipse cx='1435.4' cy='235.9' rx='0.55' ry='1.0' fill='#5C4332'/><ellipse cx='1482.0' cy='244.6' rx='0.55' ry='1.0' fill='#5C4332'/><ellipse cx='1439.0' cy='267.3' rx='0.55' ry='1.0' fill='#5C4332'/><ellipse cx='1494.7' cy='266.6' rx='0.55' ry='1.0' fill='#5C4332'/><ellipse cx='1442.1' cy='232.7' rx='0.55' ry='1.0' fill='#5C4332'/><ellipse cx='1437.0' cy='257.4' rx='0.55' ry='1.0' fill='#5C4332'/><ellipse cx='1454.8' cy='226.2' rx='0.55' ry='1.0' fill='#5C4332'/><ellipse cx='1466.5' cy='263.7' rx='0.55' ry='1.0' fill='#5C4332'/><ellipse cx='1497.1' cy='232.4' rx='0.55' ry='1.0' fill='#5C4332'/><ellipse cx='1445.5' cy='264.1' rx='0.55' ry='1.0' fill='#5C4332'/><ellipse cx='1477.9' cy='253.6' rx='0.55' ry='1.0' fill='#5C4332'/><ellipse cx='1440.9' cy='222.8' rx='0.55' ry='1.0' fill='#5C4332'/><ellipse cx='1487.0' cy='240.4' rx='0.55' ry='1.0' fill='#5C4332'/><ellipse cx='1439.6' cy='265.0' rx='0.55' ry='1.0' fill='#5C4332'/><ellipse cx='1482.9' cy='258.5' rx='0.55' ry='1.0' fill='#5C4332'/><ellipse cx='1440.4' cy='261.1' rx='0.55' ry='1.0' fill='#5C4332'/><ellipse cx='1439.1' cy='261.4' rx='0.55' ry='1.0' fill='#5C4332'/><ellipse cx='1468.9' cy='236.3' rx='0.55' ry='1.0' fill='#5C4332'/><ellipse cx='1476.6' cy='264.5' rx='0.55' ry='1.0' fill='#5C4332'/><ellipse cx='1454.6' cy='226.2' rx='0.55' ry='1.0' fill='#5C4332'/><ellipse cx='1474.6' cy='231.4' rx='0.55' ry='1.0' fill='#5C4332'/><ellipse cx='1442.4' cy='227.7' rx='0.55' ry='1.0' fill='#5C4332'/><ellipse cx='1437.9' cy='229.7' rx='0.55' ry='1.0' fill='#5C4332'/><ellipse cx='1458.0' cy='234.6' rx='0.55' ry='1.0' fill='#5C4332'/><ellipse cx='1492.5' cy='233.9' rx='0.55' ry='1.0' fill='#5C4332'/><ellipse cx='1472.5' cy='228.5' rx='0.55' ry='1.0' fill='#5C4332'/><ellipse cx='1460.7' cy='220.9' rx='0.55' ry='1.0' fill='#5C4332'/><ellipse cx='1453.3' cy='220.7' rx='0.55' ry='1.0' fill='#5C4332'/><ellipse cx='1490.4' cy='246.5' rx='0.55' ry='1.0' fill='#5C4332'/><ellipse cx='1448.6' cy='242.8' rx='0.55' ry='1.0' fill='#5C4332'/><ellipse cx='1506.0' cy='225.1' rx='0.55' ry='1.0' fill='#5C4332'/><ellipse cx='1497.1' cy='240.7' rx='0.55' ry='1.0' fill='#5C4332'/><ellipse cx='1472.1' cy='260.1' rx='0.55' ry='1.0' fill='#5C4332'/><ellipse cx='1464.3' cy='244.3' rx='0.55' ry='1.0' fill='#5C4332'/><ellipse cx='1487.0' cy='267.2' rx='0.55' ry='1.0' fill='#5C4332'/><ellipse cx='1460.4' cy='259.9' rx='0.55' ry='1.0' fill='#5C4332'/><ellipse cx='1488.4' cy='250.5' rx='0.55' ry='1.0' fill='#5C4332'/><ellipse cx='1465.2' cy='236.7' rx='0.55' ry='1.0' fill='#5C4332'/><ellipse cx='1438.2' cy='226.2' rx='0.55' ry='1.0' fill='#5C4332'/><ellipse cx='1439.4' cy='255.6' rx='0.55' ry='1.0' fill='#5C4332'/><ellipse cx='1453.7' cy='227.8' rx='0.55' ry='1.0' fill='#5C4332'/><ellipse cx='1440.5' cy='260.4' rx='0.55' ry='1.0' fill='#5C4332'/><ellipse cx='1501.0' cy='252.2' rx='0.55' ry='1.0' fill='#5C4332'/><ellipse cx='1455.7' cy='231.6' rx='0.55' ry='1.0' fill='#5C4332'/><ellipse cx='1456.6' cy='242.1' rx='0.55' ry='1.0' fill='#5C4332'/><ellipse cx='1446.1' cy='241.4' rx='0.55' ry='1.0' fill='#5C4332'/><ellipse cx='1454.3' cy='266.2' rx='0.55' ry='1.0' fill='#5C4332'/><ellipse cx='1508.9' cy='246.3' rx='0.55' ry='1.0' fill='#5C4332'/><ellipse cx='1452.8' cy='266.4' rx='0.55' ry='1.0' fill='#5C4332'/><ellipse cx='1457.8' cy='237.1' rx='0.55' ry='1.0' fill='#5C4332'/><ellipse cx='1434.1' cy='238.3' rx='0.55' ry='1.0' fill='#5C4332'/><ellipse cx='1470.5' cy='244.1' rx='0.55' ry='1.0' fill='#5C4332'/><ellipse cx='1449.5' cy='244.2' rx='0.55' ry='1.0' fill='#5C4332'/><ellipse cx='1434.4' cy='232.7' rx='0.55' ry='1.0' fill='#5C4332'/><ellipse cx='1440.9' cy='239.2' rx='0.55' ry='1.0' fill='#5C4332'/><ellipse cx='1437.2' cy='221.1' rx='0.55' ry='1.0' fill='#5C4332'/><ellipse cx='1457.4' cy='231.2' rx='0.55' ry='1.0' fill='#5C4332'/><ellipse cx='1479.1' cy='245.4' rx='0.55' ry='1.0' fill='#5C4332'/><ellipse cx='1491.8' cy='251.6' rx='0.55' ry='1.0' fill='#5C4332'/><ellipse cx='1489.1' cy='262.2' rx='0.55' ry='1.0' fill='#5C4332'/><ellipse cx='1464.0' cy='235.7' rx='0.55' ry='1.0' fill='#5C4332'/><ellipse cx='1509.8' cy='227.2' rx='0.55' ry='1.0' fill='#5C4332'/><ellipse cx='1489.8' cy='250.9' rx='0.55' ry='1.0' fill='#5C4332'/><ellipse cx='1437.4' cy='260.1' rx='0.55' ry='1.0' fill='#5C4332'/><ellipse cx='1502.7' cy='250.1' rx='0.55' ry='1.0' fill='#5C4332'/><ellipse cx='1490.5' cy='259.0' rx='0.55' ry='1.0' fill='#5C4332'/><ellipse cx='1444.7' cy='245.1' rx='0.55' ry='1.0' fill='#5C4332'/><ellipse cx='1472.8' cy='260.1' rx='0.55' ry='1.0' fill='#5C4332'/><ellipse cx='1496.0' cy='259.7' rx='0.55' ry='1.0' fill='#5C4332'/></g><path d='M1457,241 Q1472,252 1488,241 Q1486,250 1472.3,253 Q1459,250 1457,241 Z' fill='#F2C7A4' opacity='0.8'/><path d='M1451.6,231.6 Q1462,224.8 1472.3,226.8 Q1483,224.8 1493,231.6 Q1483,230 1472.3,231 Q1462,230 1451.6,231.6 Z' fill='#6F5342' stroke='#6F5342' stroke-width='2.2' stroke-linejoin='round'/><path d='M1454.6,233.4 Q1472.3,246 1490.6,233.4 Q1472.3,237 1454.6,233.4 Z' fill='#FBE3CC' stroke='#A7734F' stroke-width='0.7'/><path d='M1445.8,194.4 Q1453,188.4 1464.2,189' fill='none' stroke='#2B2522' stroke-width='2.8' stroke-linecap='round'/><path d='M1480.8,191 Q1491,189 1498.8,195.6' fill='none' stroke='#2B2522' stroke-width='2.8' stroke-linecap='round'/><path d='M1448.6,201.2 Q1455.4,196.8 1462,201' fill='none' stroke='#3A2E28' stroke-width='1.1'/><path d='M1481.6,201.4 Q1488.2,197 1495,201.6' fill='none' stroke='#3A2E28' stroke-width='1.1'/><circle cx='1455.6' cy='201.8' r='2.3' fill='#4B3A31'/><circle cx='1488.4' cy='202.2' r='2.3' fill='#4B3A31'/><path d='M1469,204 Q1469,214 1465.6,219.6 Q1467.4,223 1472.3,223 Q1477.2,223 1479,219.6 Q1476,214 1476,204' fill='none' stroke='#B98962' stroke-width='0.9'/></svg>
  <div class='t' style='left:27.8px;top:89.84px;font-size:17.5px;line-height:17.5px;font-weight:700;color:#A3A3A6;letter-spacing:0.082px;font-family:"Liberation Sans", sans-serif'>Workspace</div><div class='t' style='left:79.4px;top:125.81px;font-size:22.2px;line-height:22.2px;font-weight:400;color:#3B3B3D;letter-spacing:-0.603px;font-family:"Liberation Sans", sans-serif'>Working Copy</div><div class='t' style='left:77.4px;top:169.81px;font-size:22.2px;line-height:22.2px;font-weight:400;color:#3B3B3D;letter-spacing:-0.321px;font-family:"Liberation Sans", sans-serif'>History</div><div class='t' style='left:77.4px;top:213.81px;font-size:22.2px;line-height:22.2px;font-weight:400;color:#3B3B3D;letter-spacing:-0.796px;font-family:"Liberation Sans", sans-serif'>Stashes</div><div class='t' style='left:75.9px;top:258.81px;font-size:22.2px;line-height:22.2px;font-weight:400;color:#3B3B3D;letter-spacing:-0.785px;font-family:"Liberation Sans", sans-serif'>Pull Requests</div><div class='t' style='left:75.6px;top:301.81px;font-size:22.2px;line-height:22.2px;font-weight:400;color:#3B3B3D;letter-spacing:-0.764px;font-family:"Liberation Sans", sans-serif'>Branches Review</div><div class='t' style='left:73.2px;top:346.81px;font-size:22.2px;line-height:22.2px;font-weight:400;color:#3B3B3D;letter-spacing:-0.657px;font-family:"Liberation Sans", sans-serif'>Reflog</div><div class='t' style='left:76.8px;top:390.81px;font-size:22.2px;line-height:22.2px;font-weight:400;color:#3B3B3D;letter-spacing:-0.359px;font-family:"Liberation Sans", sans-serif'>Settings</div><div class='t' style='left:27.8px;top:451.84px;font-size:17.5px;line-height:17.5px;font-weight:700;color:#A3A3A6;letter-spacing:-0.071px;font-family:"Liberation Sans", sans-serif'>Branches</div><div class='t' style='left:75.3px;top:487.81px;font-size:22.2px;line-height:22.2px;font-weight:400;color:#3B3B3D;letter-spacing:-1.148px;font-family:"Liberation Sans", sans-serif'>main</div><div class='t' style='left:75.3px;top:531.81px;font-size:22.2px;line-height:22.2px;font-weight:400;color:#3B3B3D;letter-spacing:0.113px;font-family:"Liberation Sans", sans-serif'>init-login-form</div><div class='t' style='left:263.6px;top:533.17px;font-size:19px;line-height:19px;font-weight:700;color:#B4B4B6;letter-spacing:0.664px;font-family:"Liberation Sans", sans-serif'>HEAD</div><div class='t' style='left:95.7px;top:575.81px;font-size:22.2px;line-height:22.2px;font-weight:400;color:#FFFFFF;letter-spacing:-0.030px;font-family:"Liberation Sans", sans-serif'>github-auth</div><div class='t' style='left:95.7px;top:619.81px;font-size:22.2px;line-height:22.2px;font-weight:400;color:#3B3B3D;letter-spacing:-0.146px;font-family:"Liberation Sans", sans-serif'>google-auth</div><div class='t' style='left:27.7px;top:680.84px;font-size:17.5px;line-height:17.5px;font-weight:700;color:#A3A3A6;letter-spacing:-0.262px;font-family:"Liberation Sans", sans-serif'>Tags</div><div class='t' style='left:27.7px;top:732.84px;font-size:17.5px;line-height:17.5px;font-weight:700;color:#A3A3A6;letter-spacing:-0.032px;font-family:"Liberation Sans", sans-serif'>Remotes</div><div class='t' style='left:78.9px;top:767.81px;font-size:22.2px;line-height:22.2px;font-weight:400;color:#3B3B3D;letter-spacing:-0.347px;font-family:"Liberation Sans", sans-serif'>origin</div><div class='t' style='left:27.7px;top:828.84px;font-size:17.5px;line-height:17.5px;font-weight:700;color:#A3A3A6;letter-spacing:0.018px;font-family:"Liberation Sans", sans-serif'>Submodules</div><div class='t' style='left:54.3px;top:913.99px;font-size:19.5px;line-height:19.5px;font-weight:400;color:#A6A6A9;letter-spacing:0.593px;font-family:"Liberation Sans", sans-serif'>Filter</div><div class='t' style='left:574.0px;top:19.93px;font-size:22px;line-height:22px;font-weight:700;color:#3C3C3E;letter-spacing:-0.061px;font-family:"Liberation Sans", sans-serif'>graphite-repo</div><div class='t' style='left:574.0px;top:43.89px;font-size:18.5px;line-height:18.5px;font-weight:400;color:#707072;letter-spacing:0.068px;font-family:"Liberation Sans", sans-serif'>github-auth (1 Commits)</div><div class='t' style='left:390.9px;top:104.05px;font-size:20.5px;line-height:20.5px;font-weight:400;color:#7F7F81;letter-spacing:0.801px;font-family:"Liberation Sans", sans-serif'>github-auth</div><div class='t' style='left:403.9px;top:163.27px;font-size:20px;line-height:20px;font-weight:400;color:#857245;letter-spacing:0.601px;font-family:"Liberation Sans", sans-serif'>Pending changes in parent branches.</div><div class='t' style='left:846.7px;top:163.27px;font-size:20px;line-height:20px;font-weight:400;color:#3E3A2E;letter-spacing:-0.344px;font-family:"Liberation Sans", sans-serif'>Restack…</div><div class='t' style='left:410.3px;top:234.96px;font-size:16px;line-height:16px;font-weight:400;color:#7C7C7C;letter-spacing:0.899px;font-family:"Liberation Sans", sans-serif'>NOVEMBER 2024</div><div class='t' style='left:1020.8px;top:107.18px;font-size:20px;line-height:20px;font-weight:400;color:#7D7D7D;letter-spacing:0.023px;font-family:"Liberation Mono", monospace'>c54b100b</div><div class='t' style='left:1373.3px;top:101.32px;font-size:21px;line-height:21px;font-weight:400;color:#FFFFFF;letter-spacing:0.047px;font-family:"Liberation Sans", sans-serif'>Changeset</div><div class='t' style='left:1497.0px;top:101.32px;font-size:21px;line-height:21px;font-weight:400;color:#303030;letter-spacing:-0.402px;font-family:"Liberation Sans", sans-serif'>Tree</div><div class='t' style='left:1100.9px;top:160.17px;font-size:19px;line-height:19px;font-weight:400;color:#ABABAD;letter-spacing:0.419px;font-family:"Liberation Sans", sans-serif'>Author</div><div class='t' style='left:1174.3px;top:160.17px;font-size:19px;line-height:19px;font-weight:400;color:#6B6B6D;letter-spacing:0.178px;font-family:"Liberation Sans", sans-serif'>Bruno Brito &lt;bruno@gi…</div><div class='t' style='left:1053.9px;top:189.17px;font-size:19px;line-height:19px;font-weight:400;color:#ABABAD;letter-spacing:0.372px;font-family:"Liberation Sans", sans-serif'>Author Date</div><div class='t' style='left:1174.3px;top:189.17px;font-size:19px;line-height:19px;font-weight:400;color:#6B6B6D;letter-spacing:0.213px;font-family:"Liberation Sans", sans-serif'>18 November 2024 at…</div><div class='t' style='left:1066.7px;top:219.17px;font-size:19px;line-height:19px;font-weight:400;color:#ABABAD;letter-spacing:0.564px;font-family:"Liberation Sans", sans-serif'>Committer</div><div class='t' style='left:1174.3px;top:219.17px;font-size:19px;line-height:19px;font-weight:400;color:#6B6B6D;letter-spacing:0.178px;font-family:"Liberation Sans", sans-serif'>Bruno Brito &lt;bruno@gi…</div><div class='t' style='left:1026.4px;top:249.17px;font-size:19px;line-height:19px;font-weight:400;color:#ABABAD;letter-spacing:0.000px;font-family:"Liberation Sans", sans-serif'>Committer Date</div><div class='t' style='left:1174.3px;top:249.17px;font-size:19px;line-height:19px;font-weight:400;color:#6B6B6D;letter-spacing:0.213px;font-family:"Liberation Sans", sans-serif'>18 November 2024 at…</div><div class='t' style='left:1122.1px;top:279.17px;font-size:19px;line-height:19px;font-weight:400;color:#ABABAD;letter-spacing:-0.445px;font-family:"Liberation Sans", sans-serif'>Refs</div><div class='t' style='left:1115.5px;top:310.17px;font-size:19px;line-height:19px;font-weight:400;color:#ABABAD;letter-spacing:-0.115px;font-family:"Liberation Sans", sans-serif'>Hash</div><div class='t' style='left:1174.3px;top:310.17px;font-size:19px;line-height:19px;font-weight:400;color:#6B6B6D;letter-spacing:0.345px;font-family:"Liberation Sans", sans-serif'>c54b100ba39104a5a0…</div><div class='t' style='left:1115.5px;top:340.17px;font-size:19px;line-height:19px;font-weight:400;color:#ABABAD;letter-spacing:-0.115px;font-family:"Liberation Sans", sans-serif'>Hash</div><div class='t' style='left:1174.3px;top:340.17px;font-size:19px;line-height:19px;font-weight:400;color:#6B6B6D;letter-spacing:0.469px;font-family:"Liberation Sans", sans-serif'>295ad9c7ab6db4fc74…</div><div class='t' style='left:1177.0px;top:281.23px;font-size:16.5px;line-height:16.5px;font-weight:400;color:#FFFFFF;letter-spacing:0.164px;font-family:"Liberation Sans", sans-serif'>HEAD</div><div class='t' style='left:1244.8px;top:281.23px;font-size:16.5px;line-height:16.5px;font-weight:400;color:#FFFFFF;letter-spacing:1.236px;font-family:"Liberation Sans", sans-serif'>init-login-form</div><div class='t' style='left:1024.9px;top:424.32px;font-size:21px;line-height:21px;font-weight:400;color:#222222;letter-spacing:0.000px;font-family:"Liberation Sans", sans-serif'>Initial commit</div><div class='t' style='left:1132.8px;top:477.11px;font-size:18px;line-height:18px;font-weight:400;color:#7E7E80;letter-spacing:0.252px;font-family:"Liberation Sans", sans-serif'>Showing 3 changed files with 59 additions and 0…</div><div class='t' style='left:1093.8px;top:525.11px;font-size:18px;line-height:18px;font-weight:400;color:#4CBF5A;letter-spacing:0.000px;font-family:"Liberation Sans", sans-serif'>Added</div><div class='t' style='left:1198.4px;top:525.11px;font-size:18px;line-height:18px;font-weight:400;color:#6E6E70;letter-spacing:0.245px;font-family:"Liberation Sans", sans-serif'>index.html</div><div class='t' style='left:1093.8px;top:573.11px;font-size:18px;line-height:18px;font-weight:400;color:#4CBF5A;letter-spacing:0.000px;font-family:"Liberation Sans", sans-serif'>Added</div><div class='t' style='left:1198.4px;top:573.11px;font-size:18px;line-height:18px;font-weight:400;color:#6E6E70;letter-spacing:0.000px;font-family:"Liberation Sans", sans-serif'>script.js</div><div class='t' style='left:1093.8px;top:620.11px;font-size:18px;line-height:18px;font-weight:400;color:#4CBF5A;letter-spacing:0.000px;font-family:"Liberation Sans", sans-serif'>Added</div><div class='t' style='left:1198.4px;top:620.11px;font-size:18px;line-height:18px;font-weight:400;color:#6E6E70;letter-spacing:0.000px;font-family:"Liberation Sans", sans-serif'>style.css</div>

  <!-- menu -->
  <div class="abs" style="left:356.3px;top:254.3px;width:753.5px;height:720px;border-radius:12.5px;background:#DCDCDC;box-shadow:0 0 0 1px rgba(0,0,0,0.2),0 2px 10px rgba(0,0,0,0.08),0 12px 40px rgba(0,0,0,0.30)"></div>
  <div class="abs" style="left:365px;top:417.9px;width:736px;height:38px;border-radius:6.5px;background:#3E90FA"></div>
  <div class="abs" style="left:381px;top:349.5px;width:704px;height:1.5px;background:#C5C5C5"></div>
  <div class="abs" style="left:381px;top:407.5px;width:704px;height:1.5px;background:#C5C5C5"></div>
  <div class="abs" style="left:381px;top:774.5px;width:704px;height:1.5px;background:#C5C5C5"></div>
  <div class="abs" style="left:381px;top:832.2px;width:704px;height:1.5px;background:#C5C5C5"></div>
  <div class="abs" style="left:381px;top:929px;width:704px;height:1.5px;background:#C5C5C5"></div>
  <div class='abs' style='left:990.7px;top:462.0px;width:96.2px;height:27.8px;border-radius:14px;background:#C9C9C9'></div><div class='abs' style='left:990.7px;top:500.6px;width:96.2px;height:27.8px;border-radius:14px;background:#C9C9C9'></div><div class='abs' style='left:990.7px;top:539.2px;width:96.2px;height:27.8px;border-radius:14px;background:#C9C9C9'></div><div class='abs' style='left:990.7px;top:577.8px;width:96.2px;height:27.8px;border-radius:14px;background:#C9C9C9'></div><div class='abs' style='left:990.7px;top:616.4px;width:96.2px;height:27.8px;border-radius:14px;background:#C9C9C9'></div><div class='abs' style='left:990.7px;top:655.0px;width:96.2px;height:27.8px;border-radius:14px;background:#C9C9C9'></div><div class='abs' style='left:990.7px;top:693.6px;width:96.2px;height:27.8px;border-radius:14px;background:#C9C9C9'></div>
  <svg width='1580' height='946' style='left:0;top:0'><polygon points='396.18,424.73 405.36,433.36 402.49,445.63 390.42,449.27 381.24,440.64 384.11,428.37' fill='#FFFFFF' stroke='#FFFFFF' stroke-width='0.6' stroke-linejoin='round'/><polygon points='403.40,437.00 398.35,445.75 388.25,445.75 383.20,437.00 388.25,428.25 398.35,428.25' fill='#3E90FA'/><polygon points='391.23,429.27 398.96,431.34 401.03,439.07 395.37,444.73 387.64,442.66 385.57,434.93' fill='#FFFFFF'/><polygon points='396.18,463.33 405.36,471.96 402.49,484.23 390.42,487.87 381.24,479.24 384.11,466.97' fill='#202020' stroke='#202020' stroke-width='0.6' stroke-linejoin='round'/><polygon points='403.40,475.60 398.35,484.35 388.25,484.35 383.20,475.60 388.25,466.85 398.35,466.85' fill='#DCDCDC'/><polygon points='391.23,467.87 398.96,469.94 401.03,477.67 395.37,483.33 387.64,481.26 385.57,473.53' fill='#202020'/><polygon points='396.18,501.93 405.36,510.56 402.49,522.83 390.42,526.47 381.24,517.84 384.11,505.57' fill='#202020' stroke='#202020' stroke-width='0.6' stroke-linejoin='round'/><polygon points='403.40,514.20 398.35,522.95 388.25,522.95 383.20,514.20 388.25,505.45 398.35,505.45' fill='#DCDCDC'/><polygon points='391.23,506.47 398.96,508.54 401.03,516.27 395.37,521.93 387.64,519.86 385.57,512.13' fill='#202020'/><polygon points='396.18,540.53 405.36,549.16 402.49,561.43 390.42,565.07 381.24,556.44 384.11,544.17' fill='#A9A9A9' stroke='#A9A9A9' stroke-width='0.6' stroke-linejoin='round'/><polygon points='403.40,552.80 398.35,561.55 388.25,561.55 383.20,552.80 388.25,544.05 398.35,544.05' fill='#DCDCDC'/><polygon points='391.23,545.07 398.96,547.14 401.03,554.87 395.37,560.53 387.64,558.46 385.57,550.73' fill='#A9A9A9'/><polygon points='396.18,579.13 405.36,587.76 402.49,600.03 390.42,603.67 381.24,595.04 384.11,582.77' fill='#202020' stroke='#202020' stroke-width='0.6' stroke-linejoin='round'/><polygon points='403.40,591.40 398.35,600.15 388.25,600.15 383.20,591.40 388.25,582.65 398.35,582.65' fill='#DCDCDC'/><polygon points='391.23,583.67 398.96,585.74 401.03,593.47 395.37,599.13 387.64,597.06 385.57,589.33' fill='#202020'/><polygon points='396.18,617.73 405.36,626.36 402.49,638.63 390.42,642.27 381.24,633.64 384.11,621.37' fill='#202020' stroke='#202020' stroke-width='0.6' stroke-linejoin='round'/><polygon points='403.40,630.00 398.35,638.75 388.25,638.75 383.20,630.00 388.25,621.25 398.35,621.25' fill='#DCDCDC'/><polygon points='391.23,622.27 398.96,624.34 401.03,632.07 395.37,637.73 387.64,635.66 385.57,627.93' fill='#202020'/><polygon points='396.18,656.33 405.36,664.96 402.49,677.23 390.42,680.87 381.24,672.24 384.11,659.97' fill='#202020' stroke='#202020' stroke-width='0.6' stroke-linejoin='round'/><polygon points='403.40,668.60 398.35,677.35 388.25,677.35 383.20,668.60 388.25,659.85 398.35,659.85' fill='#DCDCDC'/><polygon points='391.23,660.87 398.96,662.94 401.03,670.67 395.37,676.33 387.64,674.26 385.57,666.53' fill='#202020'/><polygon points='396.18,694.93 405.36,703.56 402.49,715.83 390.42,719.47 381.24,710.84 384.11,698.57' fill='#202020' stroke='#202020' stroke-width='0.6' stroke-linejoin='round'/><polygon points='403.40,707.20 398.35,715.95 388.25,715.95 383.20,707.20 388.25,698.45 398.35,698.45' fill='#DCDCDC'/><polygon points='391.23,699.47 398.96,701.54 401.03,709.27 395.37,714.93 387.64,712.86 385.57,705.13' fill='#202020'/><polygon points='396.18,733.53 405.36,742.16 402.49,754.43 390.42,758.07 381.24,749.44 384.11,737.17' fill='#202020' stroke='#202020' stroke-width='0.6' stroke-linejoin='round'/><polygon points='403.40,745.80 398.35,754.55 388.25,754.55 383.20,745.80 388.25,737.05 398.35,737.05' fill='#DCDCDC'/><polygon points='391.23,738.07 398.96,740.14 401.03,747.87 395.37,753.53 387.64,751.46 385.57,743.73' fill='#202020'/><path d='M1073,740.2 L1079.4,746.6 L1073,753' fill='none' stroke='#2A2A2A' stroke-width='2.2' stroke-linecap='round' stroke-linejoin='round'/></svg>
  <div class='t' style='left:381.8px;top:271.88px;font-size:23.3px;line-height:23.3px;font-weight:400;color:#1F1F1F;letter-spacing:0.469px;font-family:"Liberation Sans", sans-serif'>Check Out “google-auth”</div><div class='t' style='left:381.8px;top:310.88px;font-size:23.3px;line-height:23.3px;font-weight:400;color:#1F1F1F;letter-spacing:0.254px;font-family:"Liberation Sans", sans-serif'>Check Out “google-auth” in New Worktree…</div><div class='t' style='left:381.5px;top:368.88px;font-size:23.3px;line-height:23.3px;font-weight:400;color:#1F1F1F;letter-spacing:0.469px;font-family:"Liberation Sans", sans-serif'>Pin “google-auth”</div><div class='t' style='left:416.0px;top:426.88px;font-size:23.3px;line-height:23.3px;font-weight:400;color:#FFFFFF;letter-spacing:0.099px;font-family:"Liberation Sans", sans-serif'>Restack “google-auth”…</div><div class='t' style='left:416.0px;top:464.88px;font-size:23.3px;line-height:23.3px;font-weight:400;color:#1F1F1F;letter-spacing:0.087px;font-family:"Liberation Sans", sans-serif'>Sync “google-auth”…</div><div class='t' style='left:416.0px;top:503.88px;font-size:23.3px;line-height:23.3px;font-weight:400;color:#1F1F1F;letter-spacing:0.150px;font-family:"Liberation Sans", sans-serif'>Submit “google-auth”…</div><div class='t' style='left:416.0px;top:541.88px;font-size:23.3px;line-height:23.3px;font-weight:400;color:#A3A3A3;letter-spacing:0.299px;font-family:"Liberation Sans", sans-serif'>Add “google-auth” to Merge Queue…</div><div class='t' style='left:416.0px;top:580.88px;font-size:23.3px;line-height:23.3px;font-weight:400;color:#1F1F1F;letter-spacing:0.192px;font-family:"Liberation Sans", sans-serif'>Create New Stacked Branch from “google-auth”…</div><div class='t' style='left:416.0px;top:619.88px;font-size:23.3px;line-height:23.3px;font-weight:400;color:#1F1F1F;letter-spacing:0.162px;font-family:"Liberation Sans", sans-serif'>Delete “google-auth”…</div><div class='t' style='left:416.0px;top:657.88px;font-size:23.3px;line-height:23.3px;font-weight:400;color:#1F1F1F;letter-spacing:-0.029px;font-family:"Liberation Sans", sans-serif'>Rename “google-auth”…</div><div class='t' style='left:416.0px;top:696.88px;font-size:23.3px;line-height:23.3px;font-weight:400;color:#1F1F1F;letter-spacing:0.083px;font-family:"Liberation Sans", sans-serif'>Squash “google-auth”…</div><div class='t' style='left:416.0px;top:734.88px;font-size:23.3px;line-height:23.3px;font-weight:400;color:#1F1F1F;letter-spacing:0.159px;font-family:"Liberation Sans", sans-serif'>Track Parent Branch</div><div class='t' style='left:380.2px;top:793.88px;font-size:23.3px;line-height:23.3px;font-weight:400;color:#A2A2A2;letter-spacing:-0.126px;font-family:"Liberation Sans", sans-serif'>Force Push with Lease…</div><div class='t' style='left:381.0px;top:851.88px;font-size:23.3px;line-height:23.3px;font-weight:400;color:#1F1F1F;letter-spacing:0.147px;font-family:"Liberation Sans", sans-serif'>Publish “google-auth”…</div><div class='t' style='left:381.0px;top:890.88px;font-size:23.3px;line-height:23.3px;font-weight:400;color:#1F1F1F;letter-spacing:0.327px;font-family:"Liberation Sans", sans-serif'>Push “google-auth” To…</div><div class='t' style='left:1005.4px;top:428.84px;font-size:17.5px;line-height:17.5px;font-weight:700;color:#FFFFFF;letter-spacing:0.063px;font-family:"Liberation Sans", sans-serif'>Preview</div><div class='t' style='left:1005.4px;top:467.84px;font-size:17.5px;line-height:17.5px;font-weight:700;color:#262626;letter-spacing:0.063px;font-family:"Liberation Sans", sans-serif'>Preview</div><div class='t' style='left:1005.4px;top:505.84px;font-size:17.5px;line-height:17.5px;font-weight:700;color:#262626;letter-spacing:0.063px;font-family:"Liberation Sans", sans-serif'>Preview</div><div class='t' style='left:1005.4px;top:544.84px;font-size:17.5px;line-height:17.5px;font-weight:700;color:#262626;letter-spacing:0.063px;font-family:"Liberation Sans", sans-serif'>Preview</div><div class='t' style='left:1005.4px;top:583.84px;font-size:17.5px;line-height:17.5px;font-weight:700;color:#262626;letter-spacing:0.063px;font-family:"Liberation Sans", sans-serif'>Preview</div><div class='t' style='left:1005.4px;top:621.84px;font-size:17.5px;line-height:17.5px;font-weight:700;color:#262626;letter-spacing:0.063px;font-family:"Liberation Sans", sans-serif'>Preview</div><div class='t' style='left:1005.4px;top:660.84px;font-size:17.5px;line-height:17.5px;font-weight:700;color:#262626;letter-spacing:0.063px;font-family:"Liberation Sans", sans-serif'>Preview</div><div class='t' style='left:1005.4px;top:698.84px;font-size:17.5px;line-height:17.5px;font-weight:700;color:#262626;letter-spacing:0.063px;font-family:"Liberation Sans", sans-serif'>Preview</div>
  <div class="abs" style="left:0;top:0;width:1580px;height:949px;border-radius:18px;box-shadow:inset 0 0 0 1px rgba(255,255,255,0.5)"></div>
</div>
</body></html>
